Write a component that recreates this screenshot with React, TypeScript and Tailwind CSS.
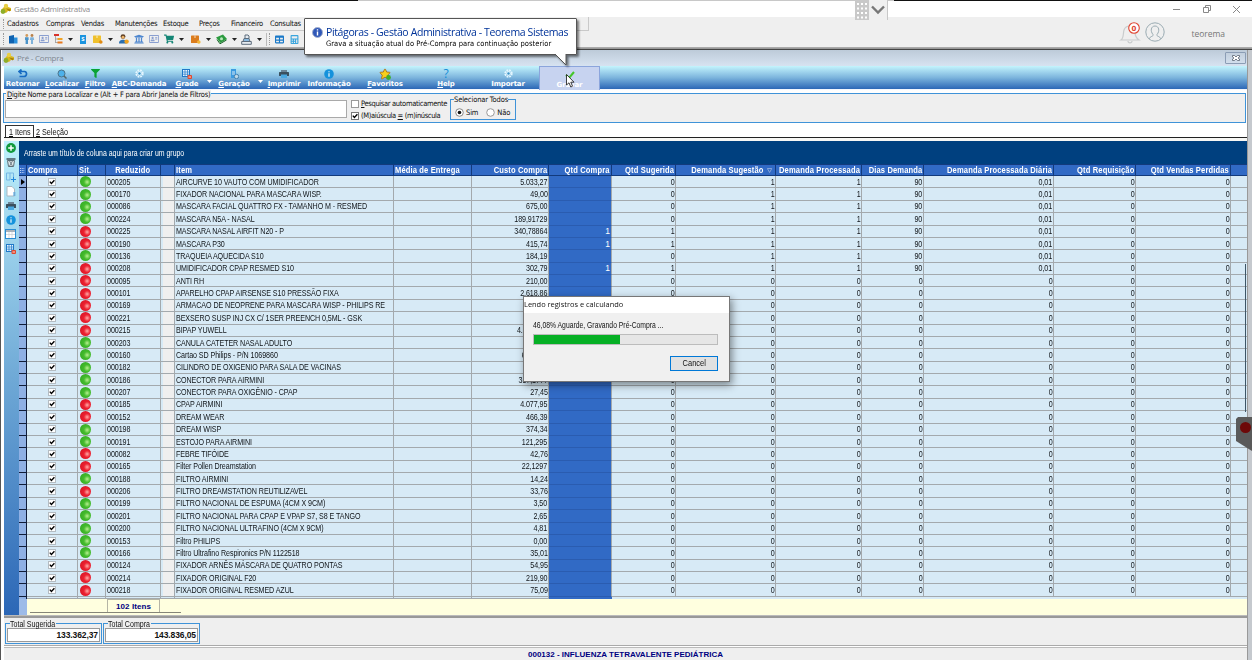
import React, { ReactNode } from "react";
import {
  FaCalculator,
  FaFilter,
  FaRegAddressCard,
  FaShoppingCart,
  FaTable,
  FaUniversity,
} from "react-icons/fa";
import { BiSolidStar } from "react-icons/bi";

type Row = {
  code: string;
  ok: boolean;
  item: string;
  cost: string;
  buy?: string;
  demand?: boolean;
};

const ROWS: Row[] = [
  { code: "000205", ok: true, item: "AIRCURVE 10 VAUTO COM UMIDIFICADOR", cost: "5.033,27", demand: true },
  { code: "000170", ok: true, item: "FIXADOR NACIONAL PARA MASCARA WISP.", cost: "49,00", demand: true },
  { code: "000086", ok: true, item: "MASCARA FACIAL QUATTRO FX - TAMANHO M - RESMED", cost: "675,00", demand: true },
  { code: "000224", ok: true, item: "MASCARA N5A - NASAL", cost: "189,91729", demand: true },
  { code: "000225", ok: false, item: "MASCARA NASAL AIRFIT N20 - P", cost: "340,78864", buy: "1", demand: true },
  { code: "000190", ok: false, item: "MASCARA P30", cost: "415,74", buy: "1", demand: true },
  { code: "000136", ok: true, item: "TRAQUEIA AQUECIDA S10", cost: "184,19", demand: true },
  { code: "000208", ok: false, item: "UMIDIFICADOR CPAP RESMED S10", cost: "302,79", buy: "1", demand: true },
  { code: "000095", ok: false, item: "ANTI RH", cost: "210,00" },
  { code: "000101", ok: false, item: "APARELHO CPAP AIRSENSE S10 PRESSÃO FIXA", cost: "2.618,86" },
  { code: "000169", ok: false, item: "ARMACAO DE NEOPRENE PARA MASCARA WISP - PHILIPS RE", cost: "" },
  { code: "000221", ok: false, item: "BEXSERO SUSP INJ CX C/ 1SER PREENCH 0,5ML - GSK", cost: "" },
  { code: "000215", ok: false, item: "BIPAP YUWELL", cost: "4.500,000" },
  { code: "000203", ok: true, item: "CANULA CATETER NASAL ADULTO", cost: "" },
  { code: "000160", ok: true, item: "Cartao SD Philips - P/N 1069860", cost: "600,000" },
  { code: "000182", ok: true, item: "CILINDRO DE OXIGENIO PARA SALA DE VACINAS", cost: "" },
  { code: "000186", ok: true, item: "CONECTOR PARA AIRMINI", cost: "357,1777" },
  { code: "000207", ok: true, item: "CONECTOR PARA OXIGÊNIO - CPAP", cost: "27,45" },
  { code: "000185", ok: false, item: "CPAP AIRMINI", cost: "4.077,95" },
  { code: "000152", ok: false, item: "DREAM WEAR", cost: "466,39" },
  { code: "000198", ok: true, item: "DREAM WISP", cost: "374,34" },
  { code: "000191", ok: true, item: "ESTOJO PARA AIRMINI", cost: "121,295" },
  { code: "000082", ok: false, item: "FEBRE TIFÓIDE", cost: "42,76" },
  { code: "000165", ok: false, item: "Filter Pollen Dreamstation", cost: "22,1297" },
  { code: "000188", ok: true, item: "FILTRO AIRMINI", cost: "14,24" },
  { code: "000206", ok: false, item: "FILTRO DREAMSTATION REUTILIZAVEL", cost: "33,76" },
  { code: "000199", ok: true, item: "FILTRO NACIONAL DE ESPUMA (4CM X 9CM)", cost: "3,50" },
  { code: "000201", ok: true, item: "FILTRO NACIONAL PARA CPAP E VPAP S7, S8 E TANGO", cost: "2,65" },
  { code: "000200", ok: true, item: "FILTRO NACIONAL ULTRAFINO (4CM X 9CM)", cost: "4,81" },
  { code: "000153", ok: true, item: "Filtro PHILIPS", cost: "0,00" },
  { code: "000166", ok: true, item: "Filtro Ultrafino Respironics P/N 1122518", cost: "35,01" },
  { code: "000124", ok: false, item: "FIXADOR ARNÊS MÁSCARA DE QUATRO PONTAS", cost: "54,95" },
  { code: "000214", ok: false, item: "FIXADOR ORIGINAL F20", cost: "219,90" },
  { code: "000218", ok: false, item: "FIXADOR ORIGINAL RESMED AZUL", cost: "75,09" },
];

const COLS =
  "grid grid-cols-[8px_51px_28px_55px_14px_219px_78px_77px_63px_64px_100px_86px_62px_130px_82px_95px_1fr]";

const SANS = "font-['Liberation_Sans',sans-serif]";
const TAHOMA = "font-['DejaVu_Sans_Condensed','DejaVu_Sans',sans-serif]";
const SEGOE = "font-['Open_Sans','Noto_Sans',sans-serif]";

function AppLogo() {
  return (
    <svg width="13" height="12" viewBox="0 0 13 12" className="shrink-0">
      <path d="M4 4 L6 2 L8 4 L11 5 L11 8 L8 8 L6 10 L3 9 L1 10 L1 7 Z" fill="#d7b81f" />
      <circle cx="6" cy="3" r="2.2" fill="#e8cf45" />
      <circle cx="3" cy="8.5" r="2.4" fill="#8fae2a" />
      <path d="M6 5.5 L11 6.5 L9.5 8.5 Z" fill="#a87f0c" />
    </svg>
  );
}

function Caret({ color }: { color: string }) {
  return (
    <svg width="5" height="3" viewBox="0 0 5 3">
      <path d="M0 0H5L2.5 3Z" fill={color} />
    </svg>
  );
}

function Info({ size }: { size: number }) {
  return (
    <svg width={size} height={size} viewBox="0 0 10 10">
      <circle cx="5" cy="5" r="4.8" fill="#1592dc" />
      <path d="M5 4.3V7.8M5 2.2V3.3" stroke="#fff" strokeWidth="1.1" />
    </svg>
  );
}

function Check({ on, border = "#777" }: { on: boolean; border?: string }) {
  return (
    <svg width="8" height="8" viewBox="0 0 8 8" className="shrink-0">
      <rect x=".5" y=".5" width="7" height="7" fill="#fff" stroke={border} />
      {on && <path d="M1.8 3.6L3.4 5.4L6.4 2.2" fill="none" stroke="#000" strokeWidth="1.4" />}
    </svg>
  );
}

function Gear() {
  return (
    <svg width="9" height="9" viewBox="0 0 9 9">
      <circle cx="4.5" cy="4.5" r="3.4" fill="none" stroke="#e6f7ff" strokeWidth="1.6" strokeDasharray="1.8 .9" />
      <circle cx="4.5" cy="4.5" r="2.4" fill="#d9f0fb" />
      <circle cx="4.5" cy="4.5" r="1.2" fill="#3b93c9" />
    </svg>
  );
}

function GridIcon() {
  return (
    <svg width="10" height="10" viewBox="0 0 10 10">
      <rect x=".5" y=".5" width="7" height="7" fill="#e8f6ff" stroke="#1f78c8" />
      <path d="M3 .5V7.5M5.5 .5V7.5M.5 3H7.5M.5 5.2H7.5" stroke="#1f78c8" strokeWidth=".7" />
      <rect x="5.5" y="6" width="4.5" height="4" rx="1" fill="#e2472c" />
      <path d="M6.5 8H9" stroke="#fff" strokeWidth=".8" />
    </svg>
  );
}

function Printer() {
  return (
    <svg width="10" height="8" viewBox="0 0 10 8">
      <path d="M2 0H8V2H2Z" fill="#6b8496" />
      <rect x="0" y="2" width="10" height="4" rx=".6" fill="#3b505e" />
      <path d="M2 4.5H8V8H2Z" fill="#4aa8e0" />
    </svg>
  );
}

function People() {
  return (
    <svg width="11" height="10" viewBox="0 0 11 10">
      <circle cx="2.8" cy="1.5" r="1.4" fill="#d29a5c" />
      <path d="M1 3.2H4.6V6H4V10H1.6V6H1Z" fill="#4a93c8" />
      <circle cx="8" cy="1.5" r="1.4" fill="#b98049" />
      <path d="M6.4 3.2H9.6L10.2 6H9V10H7V6H5.8Z" fill="#7fb2da" />
    </svg>
  );
}

function Tree() {
  return (
    <svg width="9" height="10" viewBox="0 0 9 10">
      <rect x="0" y="0" width="5" height="2" fill="#d8322a" />
      <path d="M1.5 2V9M1.5 5H4M1.5 8.5H4" fill="none" stroke="#999" strokeWidth=".8" />
      <rect x="3.5" y="4" width="5" height="2" fill="#f0a325" />
      <rect x="3.5" y="7.5" width="5" height="2" fill="#e8791f" />
    </svg>
  );
}

function Box({ fill, badge }: { fill: string; badge: string }) {
  return (
    <svg width="10" height="9" viewBox="0 0 10 9">
      <rect x="0" y=".5" width="8" height="7.5" rx=".6" fill={fill} />
      <path d="M3 .5H5V3H3Z" fill="#fff" opacity=".35" />
      <circle cx="7.8" cy="7" r="1.8" fill={badge} />
    </svg>
  );
}

function Person() {
  return (
    <svg width="10" height="10" viewBox="0 0 10 10">
      <circle cx="4" cy="2.6" r="2.4" fill="#5e4026" />
      <circle cx="4" cy="3.2" r="1.5" fill="#edb56b" />
      <path d="M0 9.5C0 6.5 2 5.8 4 5.8C6 5.8 7.5 6.5 7.5 9.5Z" fill="#2b6fb0" />
      <circle cx="7.6" cy="7.6" r="2.2" fill="#f0a21f" />
    </svg>
  );
}

function Money() {
  return (
    <svg width="11" height="10" viewBox="0 0 11 10">
      <path d="M0 3.5L7 0.5L11 5L4.5 9Z" fill="#2c9b3f" />
      <path d="M1 5.5L4 9.8L10.5 6" fill="none" stroke="#176427" />
      <circle cx="5.5" cy="4.8" r="1.5" fill="#b9e6bc" />
    </svg>
  );
}

function Register() {
  return (
    <svg width="11" height="11" viewBox="0 0 11 11" fill="none" stroke="#5d6c7c">
      <path d="M.7 7.5H10.3V10.3H.7ZM2 7.5L3 4.5H8L9 7.5M4 4.5V1H7L8 2V4.5" fill="#e6ebf0" />
      <path d="M3 6H8" stroke="#2f88cf" />
    </svg>
  );
}

// name, start-to-start distance
const MENU: [string, string][] = [
  ["Cadastros", "w-[39px]"],
  ["Compras", "w-[35px]"],
  ["Vendas", "w-[34px]"],
  ["Manutenções", "w-[48px]"],
  ["Estoque", "w-[36px]"],
  ["Preços", "w-[32px]"],
  ["Financeiro", "w-[39px]"],
  ["Consultas", "w-[40px]"],
];

const SHORTCUTS: { w: string; icon: ReactNode; caret?: boolean }[] = [
  {
    w: "w-[15px]",
    icon: <svg width="9" height="9"><path d="M0 1L5 0V8.5H0Z" fill="#0f62b0" /><path d="M5 2.5H8.5V8.5H5Z" fill="#2c90dc" /></svg>,
  },
  { w: "w-[15px]", icon: <People /> },
  { w: "w-[15px]", icon: <FaRegAddressCard size={10} color="#8a9fd0" /> },
  { w: "w-[26px]", icon: <Tree />, caret: true },
  {
    w: "w-[13px]",
    icon: <span className="h-[9px] w-[6px] bg-[#1b94df] text-center text-[6px] leading-[9px] font-bold text-white">S</span>,
  },
  { w: "w-[26px]", icon: <Box fill="#efc02c" badge="#e08a14" />, caret: true },
  { w: "w-[15px]", icon: <Person /> },
  { w: "w-[15px]", icon: <FaUniversity size={10} color="#4f87cf" /> },
  { w: "w-[15px]", icon: <FaRegAddressCard size={10} color="#8a9fd0" /> },
  { w: "w-[27px]", icon: <FaShoppingCart size={10} color="#148575" />, caret: true },
  { w: "w-[25px]", icon: <Box fill="#db7c1d" badge="#f3b73a" />, caret: true },
  { w: "w-[25px]", icon: <Money />, caret: true },
  { w: "w-[26px]", icon: <Register />, caret: true },
];

function TopBar() {
  return (
    <>
      <div className="flex h-px">
        <div className="w-[358px] bg-[#111]" />
        <div className="w-[536px] bg-[#c8c8c8]" />
        <div className="flex-1 bg-[#111]" />
      </div>
      <div className="flex h-4 items-center bg-white">
        <AppLogo />
        <span className={`${SEGOE} ml-px text-[8px] tracking-[-0.3px] text-[#8c8c8c]`}>Gestão Administrativa</span>
        <div className="flex-1" />
        <div className="flex w-[79px] items-center justify-between pr-[12px]">
          <svg width="7" height="9"><path d="M0 4.5H7" stroke="#888" /></svg>
          <svg width="8" height="8" fill="none" stroke="#888"><path d="M.5 2.5H5.5V7.5H.5ZM2.5 2V.5H7.5V5.5H6" /></svg>
          <svg width="7" height="7" stroke="#888"><path d="M0 0L7 7M7 0L0 7" /></svg>
        </div>
      </div>
      <div className="flex h-[30px] bg-[#efefef]">
        <div className="flex w-[589px] flex-col">
          <div className="flex h-[14px] items-center border-r border-b border-[#c9c9c9] pl-[3px]">
            <div className="mr-[3px] h-[10px] w-px border-l border-dotted border-[#999]" />
            {MENU.map(([label, w]) => (
              <span key={label} className={`${TAHOMA} ${w} text-[7.5px] tracking-[-0.25px] whitespace-nowrap text-[#111]`}>
                {label}
              </span>
            ))}
          </div>
          <div className="flex h-4 items-center pl-[3px]">
            <div className="mr-[3px] h-[12px] w-px border-l border-dotted border-[#999]" />
            {SHORTCUTS.map((s, i) => (
              <div key={i} className={`flex shrink-0 items-center gap-[5px] pl-[2px] ${s.w}`}>
                {s.icon}
                {s.caret && <Caret color="#222" />}
              </div>
            ))}
            <div className="mr-[2px] ml-px h-[13px] w-px bg-[#bbb]" />
            <div className="h-[12px] w-px border-l border-dotted border-[#999]" />
            <div className="flex gap-[6px] pl-[5px]">
              <FaTable size={9} color="#1878c8" />
              <FaCalculator size={9} color="#3aa5dd" />
            </div>
          </div>
        </div>
        <div className="flex flex-1 items-center justify-end">
          <svg width="24" height="26" viewBox="0 0 24 26" fill="none">
            <path d="M4 21C7 19 6 14 7 11C8 8 10 7 13 7C16 7 18 9 18 13C18 17 19 19 22 21Z" stroke="#c9cccd" strokeWidth="1.2" />
            <path d="M11 22C11 24.5 15 24.5 15 22" stroke="#c9cccd" strokeWidth="1.2" />
            <circle cx="17" cy="9" r="5.3" fill="#fff" stroke="#e04532" strokeWidth="1.1" />
            <text x="17" y="11.5" textAnchor="middle" fontSize="7" fontWeight="bold" fill="#e04532" fontFamily="DejaVu Sans">0</text>
          </svg>
          <svg width="20" height="20" viewBox="0 0 20 20" className="ml-[4px]" fill="none" stroke="#9aabb2">
            <circle cx="10" cy="10" r="9.2" />
            <path d="M4 17C5 14 9 14.5 8 12.5C5 9 6 4 10 4C14 4 15 9 12 12.5C11 14.5 15 14 16 17" />
          </svg>
          <span className={`${SEGOE} mt-1 mr-[27px] ml-[27px] text-[8.5px] tracking-[-0.05px] text-[#777]`}>teorema</span>
        </div>
      </div>
    </>
  );
}

function ToolButton({ w, label, u, icon }: { w: string; label: string; u?: boolean; icon: ReactNode }) {
  return (
    <div className={`flex h-[23px] flex-col items-center ${w}`}>
      <div className="mt-[2px] flex h-[11px] items-center justify-center">{icon}</div>
      <span className="mt-px font-['DejaVu_Sans',sans-serif] text-[7px] leading-[9px] font-bold tracking-[-0.15px] whitespace-nowrap text-white">
        {u ? <u className="underline-offset-1">{label[0]}</u> : label[0]}
        {label.slice(1)}
      </span>
    </div>
  );
}

function ToolBar() {
  return (
    <div className="flex h-6 items-start border-b border-[#f4f8ff] bg-linear-to-b from-[#c4f4fd] via-[#7db5dd] to-[#2c67b6]">
      <ToolButton
        w="w-[37px]"
        label="Retornar"
        icon={<svg width="10" height="9" fill="none" stroke="#176bc2" strokeWidth="1.7"><path d="M1 2.5H6.5C9.5 3 9 7.5 6 7.5H1.5M3.5 .5L1 2.5L3.5 5" /></svg>}
      />
      <ToolButton
        w="w-[42px]"
        label="Localizar"
        u
        icon={<svg width="10" height="10"><circle cx="4.5" cy="4.5" r="3.5" fill="#4db1ea" stroke="#4d7389" /><path d="M7 7L9.5 9.5" stroke="#566" strokeWidth="1.5" /></svg>}
      />
      <ToolButton w="w-[24px]" label="Filtro" u icon={<FaFilter size={9} color="#0aa234" />} />
      <ToolButton w="w-[64px]" label="ABC-Demanda" u icon={<Gear />} />
      <ToolButton w="w-[32px]" label="Grade" u icon={<GridIcon />} />
      <div className="flex w-3 justify-center pt-[14px]"><Caret color="#fff" /></div>
      <ToolButton
        w="w-[38px]"
        label="Geração"
        u
        icon={<svg width="9" height="10"><path d="M1 0H6V9H1Z" fill="#3d9be0" /><path d="M2 3H5M2 5H5" stroke="#fff" strokeWidth=".8" /><circle cx="6.5" cy="7.5" r="2.2" fill="#c0d9e8" stroke="#4380ae" /></svg>}
      />
      <div className="flex w-[14px] justify-center pt-[14px]"><Caret color="#fff" /></div>
      <ToolButton w="w-[34px]" label="Imprimir" u icon={<Printer />} />
      <ToolButton w="w-[56px]" label="Informação" icon={<Info size={10} />} />
      <ToolButton
        w="w-[56px]"
        label="Favoritos"
        u
        icon={
          <span className="relative">
            <BiSolidStar size={12} color="#f7cf1c" stroke="#a35c10" strokeWidth={1.5} />
            <svg width="5" height="5" className="absolute right-0 bottom-0"><circle cx="2.5" cy="2.5" r="2.4" fill="#3fae2b" /></svg>
          </span>
        }
      />
      <ToolButton
        w="w-[66px]"
        label="Help"
        u
        icon={<span className={`${SEGOE} text-[12px] leading-none text-[#118dd8]`}>?</span>}
      />
      <ToolButton w="w-[58px]" label="Importar" icon={<Gear />} />
      <div className="ml-[2px] border border-b-0 border-[#8ba5dc] bg-[#c7d3f0]">
        <ToolButton
          w="w-[59px]"
          label="Gravar"
          icon={<svg width="10" height="8"><path d="M1 4L4 7L9 1" fill="none" stroke="#45c62a" strokeWidth="2" /></svg>}
        />
      </div>
    </div>
  );
}

function SearchPanel() {
  return (
    <div className="relative mt-[3px] mr-px -ml-px h-[30px] border border-[#3f93d8] bg-[#efefef]">
      <span className={`${TAHOMA} absolute top-[-4px] left-[2px] bg-[#efefef] px-px text-[7.5px] leading-[9px] tracking-[-0.24px] whitespace-nowrap`}>
        <u>D</u>igite Nome para Localizar e (Alt + F para Abrir Janela de Filtros)
      </span>
      <div className="flex">
        <div className="mt-[6px] ml-px h-[18px] w-[342px] border border-[#a9a9a9] bg-white" />
        <div className={`${TAHOMA} mt-[4px] ml-[4px] w-[97px] text-[7.5px] whitespace-nowrap`}>
          <div className="flex h-[12px] items-center gap-[2px]">
            <Check on={false} border="#999" />
            <span className="tracking-[-0.34px]"><u>P</u>esquisar automaticamente</span>
          </div>
          <div className="flex h-[12px] items-center gap-[2px]">
            <Check on />
            <span className="tracking-[-0.37px]">(M)aiúscula <u>=</u> (m)inúscula</span>
          </div>
        </div>
        <div className={`${TAHOMA} relative mt-[5px] ml-[2px] flex h-[21px] w-[66px] items-center border border-[#3f93d8] pt-[6px] text-[7.5px] tracking-[-0.15px]`}>
          <span className="absolute top-[-5px] left-[3px] bg-[#efefef] leading-[9px] whitespace-nowrap">Selecionar Todos</span>
          <svg width="9" height="9" className="ml-[4px]"><circle cx="4.5" cy="4.5" r="3.8" fill="#fff" stroke="#888" /><circle cx="4.5" cy="4.5" r="1.8" fill="#111" /></svg>
          <span className="ml-[2px]">Sim</span>
          <svg width="9" height="9" className="ml-[8px]"><circle cx="4.5" cy="4.5" r="3.8" fill="#fff" stroke="#999" /></svg>
          <span className="ml-[2px]">Não</span>
        </div>
      </div>
    </div>
  );
}

function Tabs() {
  return (
    <div className={`${SANS} flex h-[15px] items-end border-b border-[#222] bg-white pl-px text-[9px] leading-[11px]`}>
      <div className="h-[12px] w-[29px] border border-b-0 border-[#333] bg-white pt-px pl-[3px]">
        <span className="block origin-left scale-x-[0.8] leading-[10px] whitespace-nowrap"><u>1</u> Itens</span>
      </div>
      <span className="ml-[2px] block origin-left scale-x-[0.8] leading-[10px]"><u>2</u> Seleção</span>
    </div>
  );
}

function SideBar() {
  return (
    <div className="flex w-[15px] flex-col items-center gap-[4px] bg-linear-to-b from-[#bff1fb] via-[#6fa9d6] to-[#2c67b6] pt-[2px] pr-[2px]">
      <svg width="10" height="10"><circle cx="5" cy="5" r="4.9" fill="#129a3c" /><path d="M5 2.2V7.8M2.2 5H7.8" stroke="#fff" strokeWidth="1.5" /></svg>
      <div className="flex h-[11px] items-center">
        <svg width="10" height="9" viewBox="0 0 10 9">
          <path d="M.5 1H9.5" stroke="#4d5d64" strokeWidth="1.6" />
          <path d="M1.5 2.5H8.5L7.5 8.5H2.5Z" fill="#dfe8ea" stroke="#5d6f77" />
          <path d="M3.5 3L6.5 8M6.5 3L3.5 8" stroke="#5d6f77" strokeWidth=".8" />
        </svg>
      </div>
      <svg width="10" height="10" fill="none"><path d="M.5 1H4V8H.5ZM4 1H7.5V5" stroke="#76b7e5" /><path d="M7.5 5V10M5 7.5H10" stroke="#2087dc" /></svg>
      <svg width="10" height="11"><path d="M1 .5H6L8.5 3V10H1Z" fill="#fff" stroke="#aab8c0" /><path d="M7 7H9.5M7 9H9.5" stroke="#3d9be0" /></svg>
      <div className="flex h-[10px] items-center"><Printer /></div>
      <Info size={10} />
      <svg width="11" height="10"><rect x=".5" y=".5" width="10" height="9" fill="#fff" stroke="#2a8cd4" /><path d="M1 2H10" stroke="#567" /><path d="M4 3V9M7 3V9M1 5.5H10" stroke="#c4cdd3" strokeWidth=".7" /></svg>
      <div className="mt-px"><GridIcon /></div>
    </div>
  );
}

function Head({ children, right }: { children?: ReactNode; right?: boolean }) {
  return (
    <div className={`flex items-center border-r border-[#123a7c] px-px whitespace-nowrap ${right ? "justify-end" : ""}`}>
      <span className={`flex shrink-0 scale-x-[0.89] items-center ${right ? "origin-right" : "origin-left"}`}>{children}</span>
    </div>
  );
}

function Cell({ children, left }: { children?: ReactNode; left?: boolean }) {
  return (
    <div className={`flex min-w-0 items-center border-r border-b border-[#a3a9ad] leading-[10px] whitespace-nowrap ${left ? "pl-[0.5px]" : "justify-end pr-[0.5px]"}`}>
      <span className={`shrink-0 scale-x-[0.84] ${left ? "origin-left" : "origin-right"}`}>{children}</span>
    </div>
  );
}

function Ball({ ok }: { ok: boolean }) {
  return (
    <div
      className={`h-[11px] w-[11px] shrink-0 rounded-full ${
        ok
          ? "bg-[radial-gradient(circle_at_65%_55%,#b8f090_0%,#45bb2d_35%,#2da521_100%)]"
          : "bg-[radial-gradient(circle_at_65%_55%,#ffaaa5_0%,#ec2030_35%,#cf1220_100%)]"
      }`}
    />
  );
}

function GridRow({ row, first }: { row: Row; first: boolean }) {
  const one = row.demand ? "1" : "0";
  return (
    <div className={`${COLS} min-h-0 flex-[1_1_0%] grid-rows-[minmax(0,1fr)]`}>
      <div className="flex items-center justify-center border-r border-b border-[#101c38] bg-[#8fb0e4]">
        {first && <svg width="4" height="6"><path d="M0 0L4 3L0 6Z" fill="#000" /></svg>}
      </div>
      <div className="flex items-center justify-center border-r border-b border-[#a3a9ad]"><Check on border="#b4bcc2" /></div>
      <div className="flex items-center border-r border-b border-[#a3a9ad] pl-[2px]"><Ball ok={row.ok} /></div>
      <Cell left>{row.code}</Cell>
      <div className="border-r border-b border-[#a3a9ad] pl-[2px]"><div className="h-full bg-[#efefef]" /></div>
      <Cell left>{row.item}</Cell>
      <Cell />
      <Cell>{row.cost}</Cell>
      <div className="flex items-center justify-end border-r border-b border-r-[#a3a9ad] border-b-[#2a5cb0] bg-[#316ac5] px-px leading-[10px] text-white">
        {row.buy}
      </div>
      <Cell>{row.buy ?? "0"}</Cell>
      <Cell>{one}</Cell>
      <Cell>{one}</Cell>
      <Cell>{row.demand ? "90" : "0"}</Cell>
      <Cell>{row.demand ? "0,01" : "0"}</Cell>
      <Cell>0</Cell>
      <Cell>0</Cell>
      <div className="border-b border-[#a3a9ad]" />
    </div>
  );
}

function DataGrid() {
  return (
    <div className="flex h-[474px] bg-[#d7eaf6]">
      <SideBar />
      <div className={`${SANS} flex flex-1 flex-col`}>
        <div className="flex h-[23px] items-center bg-[#00407f] pt-px pl-[5px] text-[8.5px] text-white">
          <span className="origin-left scale-x-[0.815]">Arraste um título de coluna aqui para criar um grupo</span>
        </div>
        <div className={`${COLS} h-3 border-y border-[#123a7c] bg-[#316ac5] text-[8.5px] leading-[10px] font-bold tracking-[0.15px] text-white`}>
          <Head><svg width="5" height="7" stroke="#dce8ff"><path d="M0 1.5H5M0 3.5H5M0 5.5H5" strokeDasharray="1 1" /></svg></Head>
          <Head>Compra</Head>
          <Head>Sit.</Head>
          <div className="flex items-center justify-center border-r border-[#123a7c]">
            <span className="scale-x-[0.89]">Reduzido</span>
          </div>
          <Head />
          <Head>Item</Head>
          <Head>Média de Entrega</Head>
          <Head right>Custo Compra</Head>
          <Head right>Qtd Compra</Head>
          <Head right>Qtd Sugerida</Head>
          <Head right>
            Demanda Sugestão
            <svg width="6" height="5" className="mr-[2px] ml-[4px]"><path d="M.5 .5H5.5L3 4.5Z" fill="none" stroke="#9db4dd" strokeWidth=".8" /></svg>
          </Head>
          <Head right>Demanda Processada</Head>
          <Head right>Dias Demanda</Head>
          <Head right>Demanda Processada Diária</Head>
          <Head right>Qtd Requisição</Head>
          <Head right>Qtd Vendas Perdidas</Head>
        </div>
        <div className="relative flex h-[421px] flex-col text-[8.5px] tracking-[-0.1px] text-[#101418]">
          {ROWS.map((row, i) => (
            <GridRow key={row.code} row={row} first={i === 0} />
          ))}
          <div className="absolute top-[88px] right-[1px] h-[148px] w-px bg-[#3d5566]" />
        </div>
        <div className={`${COLS} h-[2px]`}>
          <div className="border-r border-[#101c38] bg-[#8fb0e4]" />
          <Cell />
          <Cell />
          <Cell />
          <Cell />
          <Cell />
          <Cell />
          <Cell />
          <div className="bg-[#316ac5]" />
        </div>
        <div className="flex h-[16px] bg-[#ffffdf]">
          <div className="w-2 bg-[#9dbbe8]" />
          <div className="relative flex-1 pl-[80px]">
            <div className="flex h-[14px] w-[53px] items-center justify-center border border-[#b5b5a5] pt-px text-[8px] font-bold tracking-[0.1px] text-[#000080]">
              102 Itens
            </div>
            <div className="absolute bottom-[2px] left-[3px] h-px w-[151px] bg-[#858578]" />
          </div>
        </div>
      </div>
    </div>
  );
}

function TotalBox({ label, labelWidth, value }: { label: string; labelWidth: string; value: string }) {
  return (
    <div className={`${SANS} relative h-[21px] w-[97px] border border-[#3f93d8] px-px pt-[4px]`}>
      <div className={`absolute top-[-4px] left-[4px] bg-[#efefef] ${labelWidth}`}>
        <div className="origin-left scale-x-[0.83] text-[8.5px] leading-[8px] whitespace-nowrap">{label}</div>
      </div>
      <div className="h-[14px] border border-[#999] bg-white px-px text-right text-[8.5px] leading-[13px] font-bold tracking-[-0.1px]">
        {value}
      </div>
    </div>
  );
}

function ProgressDialog({ percent }: { percent: number }) {
  return (
    <div className="absolute top-[296px] left-[523px] flex h-[86px] w-[207px] flex-col border border-[#777] bg-[#f0f0f0] shadow-[2px_3px_8px_rgba(0,0,0,0.45)]">
      <div className={`${SEGOE} h-4 bg-white text-[8px] leading-[14px]`}>
        <span className="inline-block origin-left scale-x-[0.93]">Lendo registros e calculando</span>
      </div>
      <div className={`${SANS} pt-[7px] pr-[11px] pl-[9px] text-[8.5px]`}>
        <div className="h-[14px] origin-left scale-x-[0.8] leading-[10px] whitespace-nowrap">
          {percent.toFixed(2).replace(".", ",")}% Aguarde, Gravando Pré-Compra ...
        </div>
        <div className="h-[11px] border border-[#bcbcbc] bg-[#e6e6e6]">
          <div className="h-full bg-[#06b025]" style={{ width: `${percent + 1}%` }} />
        </div>
        <div className="flex justify-end pt-[11px]">
          <button className="h-[15px] w-[48px] border-[1.5px] border-[#0078d7] bg-[#e1e1e1] leading-[13px]">
            <span className="inline-block scale-x-[0.88]">Cancel</span>
          </button>
        </div>
      </div>
    </div>
  );
}

function Balloon() {
  return (
    <div className="absolute top-[18px] left-[304px] h-[48px] w-[273px] drop-shadow-[2px_2px_1px_rgba(0,0,0,0.5)]">
      <div className="flex h-[37px] rounded-[1px] border border-[#555] bg-white pt-[7px] pl-[7px]">
        <svg width="11" height="11" viewBox="0 0 11 11" className="mt-px shrink-0">
          <circle cx="5.5" cy="5.5" r="5" fill="#3058b8" stroke="#a5b1cd" />
          <path d="M5.5 4.6V8.6M5.5 2.2V3.6" stroke="#fff" strokeWidth="1.4" />
        </svg>
        <div className="ml-[3px] whitespace-nowrap">
          <div className={`${SEGOE} text-[10.5px] leading-[12px] tracking-[-0.37px] text-[#003399]`}>Pitágoras - Gestão Administrativa - Teorema Sistemas</div>
          <div className={`${TAHOMA} text-[7.5px] leading-[11px] tracking-[0.05px] text-black`}>Grava a situação atual do Pré-Compra para continuação posterior</div>
        </div>
      </div>
      <svg width="14" height="12" className="absolute top-[36px] left-[250px]">
        <path d="M1 0L12 11V0" fill="#fff" stroke="#555" />
      </svg>
    </div>
  );
}

export default function App() {
  return (
    <div className="relative h-[660px] w-[1252px] overflow-hidden bg-[#efefef] text-[#111]">
      <TopBar />
      <div className="h-[3px] border-t border-b border-t-[#aaa] border-b-[#444] bg-[#999]" />
      <div className="flex h-[610px] border-l border-[#555] bg-white">
        <div className="ml-[2px] flex w-[1244px] flex-col pl-px">
          <div className="-ml-[2px] flex h-4 items-center bg-linear-to-b from-[#bdcbd9] to-[#d7e3f1] pl-[1px]">
            <AppLogo />
            <span className={`${SEGOE} ml-px flex-1 text-[8px] tracking-[-0.22px] text-[#7e868f]`}>Pré - Compra</span>
            <div className="mr-px flex h-3 w-[21px] items-center justify-center rounded-[1px] border border-[#8b9db5]">
              <svg width="8" height="6" fill="#fff" stroke="#57616e" strokeWidth=".8"><path d="M.5 .5H2.5L4 2L5.5 .5H7.5V2L6 3L7.5 4V5.5H5.5L4 4L2.5 5.5H.5V4L2 3L.5 2Z" /></svg>
            </div>
          </div>
          <ToolBar />
          <SearchPanel />
          <Tabs />
          <div className="h-[3px] bg-[#f7f7f4]" />
          <DataGrid />
          <div className="h-[3px] border-t border-[#bbb] bg-[#999]" />
          <div className="flex h-[28px] gap-px border-b border-[#aaa] bg-[#efefef] pt-[5px] pl-px">
            <TotalBox label="Total Sugerida" labelWidth="w-[46px]" value="133.362,37" />
            <TotalBox label="Total Compra" labelWidth="w-[43px]" value="143.836,05" />
          </div>
          <div className="h-[2px] border-b border-[#bbb] bg-white" />
          <div className="flex flex-1 items-center justify-center bg-[#efefef] pt-px">
            <span className="font-['Liberation_Sans',sans-serif] text-[8px] leading-[10px] font-bold text-[#000080]">000132 - INFLUENZA TETRAVALENTE PEDIÁTRICA</span>
          </div>
        </div>
        <div className="flex-1 border-l border-[#999] bg-[#c5c9ce]" />
      </div>

      <div className="absolute top-0 left-[855px] flex h-5 w-[33px] items-center border-r border-[#c8c8c8] bg-[#f0f0f0]">
        <svg width="14" height="20" className="shrink-0 bg-[#c9c9c9]">
          {[2, 6, 10].map((x) => [3, 7.5, 12, 16.5].map((y) => <rect key={`${x}-${y}`} x={x} y={y} width="2" height="2" fill="#fff" />))}
        </svg>
        <svg width="18" height="10"><path d="M3 1.5L9 7.5L15 1.5" fill="none" stroke="#777" strokeWidth="2.4" /></svg>
      </div>
      <Balloon />
      <svg width="9" height="14" viewBox="0 0 9 14" className="absolute top-[74px] left-[566px]">
        <path d="M.5 .5V11L3 8.8L4.8 13L6.5 12.2L4.8 8.2H8Z" fill="#fff" stroke="#111" strokeWidth=".8" />
      </svg>
      <ProgressDialog percent={46.08} />
      <svg width="16" height="34" className="absolute top-[417px] left-[1236px]">
        <path d="M2 0H16V34L0 24V2Z" fill="#5a5a5a" />
        <circle cx="9.5" cy="10.5" r="5.5" fill="#6d0808" />
      </svg>
    </div>
  );
}
